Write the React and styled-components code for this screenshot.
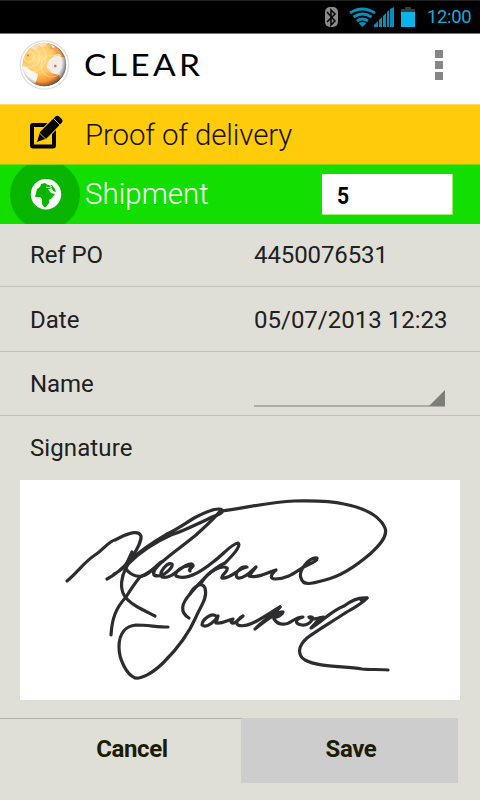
import React from 'react';
import styled, { createGlobalStyle } from 'styled-components';

const GlobalStyle = createGlobalStyle`
  * { box-sizing: border-box; }
  body { margin: 0; background: #dfdfd8; }
`;

const Screen = styled.main`
  display: flex;
  flex-direction: column;
  width: 480px;
  height: 800px;
  overflow: hidden;
  background: #dfdfd8;
  color: #20201e;
  font-family: Roboto, "Liberation Sans", sans-serif;
`;

const StatusBar = styled.div`
  display: flex;
  justify-content: flex-end;
  height: 34px;
  padding-right: 8px;
  background: #000;
  border-top: 1px solid #222;
  border-bottom: 1px solid #777;
`;

const StatusIcons = styled.svg`
  width: 98px;
  height: 32px;
  margin-right: 5px;
`;

const Clock = styled.time`
  width: 45px;
  color: #13a9dd;
  font-size: 18.4px;
  line-height: 31px;
  letter-spacing: -0.3px;
  white-space: nowrap;
`;

const Header = styled.header`
  display: flex;
  align-items: center;
  height: 70px;
  padding: 0 37px 8px 19px;
  background: #fff;
`;

const Logo = styled.svg`
  width: 51px;
  height: 52px;
`;

const Brand = styled.h1`
  flex: 1;
  margin: 0 0 3px 14px;
  color: #000;
  font-family: Lato, sans-serif;
  font-size: 30.5px;
  font-weight: 400;
  line-height: 34px;
  letter-spacing: 3px;

  span {
    display: inline-block;
    transform: scaleX(1.1);
    transform-origin: left;
  }
`;

const Overflow = styled.div`
  display: grid;
  gap: 3px;
`;

const Dot = styled.i`
  width: 8px;
  height: 8px;
  background: #868686;
`;

const Banner = styled.section`
  display: flex;
  align-items: center;
  height: ${p => p.$height}px;
  background: ${p => p.$bg};
  color: ${p => p.$fg};
  border-top: 1px solid ${p => p.$edge};
`;

const BannerIcon = styled.svg`
  flex: none;
  width: 85px;
  height: 59px;
`;

const BannerTitle = styled.h2`
  flex: 1;
  margin: 0;
  font-size: 29.5px;
  font-weight: 300;
  line-height: 34px;
  letter-spacing: ${p => p.$track}px;
  white-space: nowrap;
  padding-bottom: ${p => p.$lift || 0}px;
`;

const CountField = styled.div`
  width: 131px;
  height: 41px;
  margin-right: 27px;
  padding-left: 15px;
  border: solid #a4ee72;
  border-width: 0 1px 1px 0;
  background: #fff;
  color: #000;
  font-size: 24px;
  font-weight: 700;
  line-height: 44px;

  span {
    display: inline-block;
    transform: scaleX(0.88);
    transform-origin: left;
  }
`;

const Row = styled.div`
  display: grid;
  grid-template-columns: 224px 1fr;
  height: ${p => p.$height}px;
  padding: ${p => p.$top}px 0 0 30px;
  border-bottom: ${p => (p.$last ? 'none' : '1px solid #c0c0b9')};
  font-size: 24px;
  line-height: 28px;
`;

const Label = styled.span`
  letter-spacing: ${p => p.$track || 0}px;
  white-space: nowrap;
`;

const Value = styled.span`
  letter-spacing: ${p => p.$track || 0}px;
  white-space: nowrap;
`;

const Spinner = styled.div`
  display: flex;
  align-items: flex-end;
  justify-content: flex-end;
  width: 191px;
  height: 37px;
  border-bottom: 2px solid #adada8;
`;

const Corner = styled.svg`
  width: 16px;
  height: 16px;
  margin-bottom: -1px;
`;

const SignaturePad = styled.div`
  width: 440px;
  height: 220px;
  margin: 0 0 1px 20px;
  background: #fff;
`;

const Ink = styled.svg`
  display: block;
  width: 440px;
  height: 220px;
  fill: none;
  stroke: #2d2c2f;
  stroke-width: 3.2;
  stroke-linecap: round;
  stroke-linejoin: round;
`;

const Actions = styled.footer`
  display: flex;
  margin-top: 17px;
  padding-right: 22px;
`;

const Action = styled.button`
  width: ${p => (p.$primary ? 217 : 241)}px;
  height: 65px;
  padding: ${p => (p.$primary ? '0 0 4px 3px' : '0 0 4px 23px')};
  border: 0;
  border-top: 1px solid ${p => (p.$primary ? '#cdcdcd' : '#afafa9')};
  background: ${p => (p.$primary ? '#cdcdcd' : 'transparent')};
  color: #1c1c02;
  font: 700 24px/28px Roboto, sans-serif;
  letter-spacing: -0.4px;
`;

const SIGNATURE = [
  'M67 581C78 572 84 562 95 555C103 550 109 541 115 540L123 536C132 532 139 531 141 536C142 544 132 556 126 568C121 577 120 588 124 595C129 604 143 610 155 616',
  'M107 579C115 575 123 568 130 560C146 546 155 541 167 534C178 529 187 522 196 517C206 512 218 507 222 510C224 514 215 515 208 519C197 524 186 530 171 535C153 543 139 553 128 564C122 569 117 573 114 574',
  'M221 510C214 519 207 525 196 535C180 548 172 553 162 562C153 569 150 573 140 577C135 583 131 589 126 597C116 608 112 618 111 635',
  'M132 552L125 567C129 575 137 577 142 576C150 575 156 565 161 562C158 567 152 570 154 575C161 579 174 568 172 564C167 562 158 573 162 577C173 580 182 563 192 564C196 567 187 569 190 571M190 566C183 565 174 572 176 576C187 581 202 571 213 562C223 555 231 544 238 543C242 546 231 557 225 563C212 569 203 579 190 594C182 603 179 612 189 618',
  'M202 582C209 570 223 565 227 568C229 571 220 576 222 578C231 579 237 569 247 567C239 566 233 576 238 578C246 579 253 569 256 567L249 576C257 579 269 572 276 570C270 575 270 579 275 579C287 579 294 573 302 568C309 564 318 561 317 558C309 557 298 571 301 578C303 586 311 584 325 580C342 576 356 566 370 554C380 545 388 536 385 528C380 516 364 508 344 504C327 500 311 501 294 501C269 502 244 508 222 511',
  'M190 594C194 586 202 581 205 588C208 598 200 607 196 617C189 633 178 648 164 662C152 674 141 679 135 678C126 674 119 659 119 647C119 633 126 626 136 625C147 625 158 627 168 627',
  'M217 617C212 611 202 620 202 625C207 629 216 620 218 616L216 623C223 624 227 620 233 619C229 623 232 624 236 622L243 616C241 617 234 622 238 625C248 629 263 617 280 607C273 616 264 619 255 629C265 621 278 611 283 612C281 618 273 616 274 619C276 622 279 625 285 624C291 624 294 617 303 617C295 619 294 624 302 625C310 626 317 615 309 617M310 618C316 621 319 617 324 617C319 622 311 627 311 628C323 621 331 611 344 606C352 600 359 597 367 598C361 605 351 609 342 615C330 623 316 631 307 638C298 646 297 655 305 660C318 667 342 666 362 669C371 670 379 669 388 670',
  'M275 611L280 607M312 627L320 618M361 600L367 598',
];

export default function App() {
  return (
    <Screen>
      <GlobalStyle />
      <StatusBar>
        <StatusIcons viewBox="324 1 98 32">
          <rect x="325" y="7" width="13" height="20" rx="5" fill="#8b8b8b" />
          <path d="M327 12l8 9-4 4V10l4 4-8 8" fill="none" stroke="#080808" strokeWidth="1.6" />
          <g fill="none" stroke="#078fb9" strokeWidth="2.8">
            <path d="M350 13q12.500-8 25 0M353.500 17q9-6 18 0M357 21q5.500-4 11 0" />
          </g>
          <path d="M358.500 23q4-2 8 0l-4 4z" fill="#078fb9" />
          <path d="M374 27v-2l4-4v6zM379 27v-7l3-3v10zM383 27V16l3-3v14zM387 27V12l2-2v17zM390 27V9l4-2v20z" fill="#078fb9" />
          <path d="M401 9h4V7h6v2h4v3h-14z" fill="#3b3b3b" />
          <path d="M401 12h14v15h-14z" fill="#08b5e8" />
        </StatusIcons>
        <Clock>12:00</Clock>
      </StatusBar>

      <Header>
        <Logo viewBox="0 0 51 52">
          <defs>
            <radialGradient id="globeFill" cx=".36" cy=".36" r=".68">
              <stop offset="0" stopColor="#ffdf8b" />
              <stop offset=".5" stopColor="#fdc965" />
              <stop offset=".8" stopColor="#fa942e" />
              <stop offset="1" stopColor="#d9691f" />
            </radialGradient>
            <radialGradient id="globeShade" cx=".45" cy=".45" r=".56">
              <stop offset=".78" stopColor="#666" stopOpacity="0" />
              <stop offset="1" stopColor="#444" stopOpacity=".75" />
            </radialGradient>
            <clipPath id="globeClip"><circle cx="25.300" cy="25.500" r="22" /></clipPath>
          </defs>
          <circle cx="25.500" cy="26" r="24.200" fill="#fff" stroke="#dedede" strokeWidth="1.200" />
          <g clipPath="url(#globeClip)">
            <circle cx="25.300" cy="25.500" r="22" fill="url(#globeFill)" />
            <path d="M4 27q5 1 7 4l8 4-1 5-2 5L3 38z" fill="#f8f6f2" />
            <path d="M35 16l5 1 7 2v22l-4 1-3-6-7-2-5-6 2-7 5-4z" fill="#f0ece5" />
            <path d="M10 9l9-6 10 1-4 4-5-1-3 4z" fill="#f4dfbd" />
            <path d="M31 6l9 3 4 8-6-2-3-4-4-1z" fill="#f2a05a" />
            <path d="M31 5l5 3-2 1zM37 16l3-1 3 2z" fill="#fff" />
            <g fill="none" stroke="#fff" strokeWidth=".65" opacity=".55">
              <circle cx="36" cy="27" r="4" /><circle cx="35" cy="27" r="7" />
              <circle cx="33" cy="27" r="11" /><circle cx="10" cy="18" r="5" />
              <circle cx="11" cy="18" r="10" /><circle cx="12" cy="18" r="15" />
            </g>
            <circle cx="36.300" cy="27" r="1.200" fill="#ee5267" />
            <circle cx="9" cy="16.500" r=".9" fill="#e95f46" />
            <circle cx="25.300" cy="25.500" r="22" fill="url(#globeShade)" />
          </g>
        </Logo>
        <Brand><span>CLEAR</span></Brand>
        <Overflow><Dot /><Dot /><Dot /></Overflow>
      </Header>

      <Banner $height={60} $bg="#ffcb0b" $fg="#171500" $edge="#ffdd5c">
        <BannerIcon viewBox="0 105 85 59">
          <rect x="32" y="125" width="22" height="21.500" rx="1" fill="none" stroke="#000" strokeWidth="4" />
          <path d="M37 142l3-10L55.500 116.500q2-1.800 4 .2l2 2q2 2 .2 4L46.500 138.500z" fill="#000" stroke="#ffcb0b" strokeWidth="2" paintOrder="stroke" />
          <path d="M53.500 118.500l6.500 6.500M39.500 133l6 6" stroke="#ffcb0b" strokeWidth=".9" />
        </BannerIcon>
        <BannerTitle $track={-0.15}>Proof of delivery</BannerTitle>
      </Banner>
      <Banner $height={60} $bg="#12df00" $fg="#fff" $edge="#83d306">
        <BannerIcon viewBox="0 165 85 59">
          <circle cx="45" cy="195" r="35" fill="#08b600" />
          <circle cx="46" cy="194.300" r="15.200" fill="#fff" />
          <path d="M36 193l1-4 3-2 1-3 4-1 3 2 4 0 3 4 1 3-3-1-2-2-3 0 3 4 4 1-3 4-3 2 0 3-3 4-2 0-2-3 0-5-2-2-5 0z" fill="#08b600" />
          <path d="M46 187l5 1 2 3M50 184l0 2 2 1" fill="none" stroke="#fff" strokeWidth=".9" />
        </BannerIcon>
        <BannerTitle $track={0} $lift={2}>Shipment</BannerTitle>
        <CountField><span>5</span></CountField>
      </Banner>

      <Row $height={63} $top={17}><Label $track={-0.1}>Ref PO</Label><Value $track={-0.1}>4450076531</Value></Row>
      <Row $height={65} $top={19}><Label>Date</Label><Value>05/07/2013 12:23</Value></Row>
      <Row $height={64} $top={18}>
        <Label $track={-0.1}>Name</Label>
        <Spinner><Corner viewBox="0 0 16 16"><path d="M0 16L16 0v16z" fill="#7e7e78" /></Corner></Spinner>
      </Row>
      <Row $height={64} $top={18} $last><Label $track={0.1}>Signature</Label></Row>

      <SignaturePad>
        <Ink viewBox="20 480 440 220" role="img" aria-label="Customer signature">
          {SIGNATURE.map(d => <path key={d} d={d} />)}
        </Ink>
      </SignaturePad>

      <Actions>
        <Action>Cancel</Action>
        <Action $primary>Save</Action>
      </Actions>
    </Screen>
  );
}
